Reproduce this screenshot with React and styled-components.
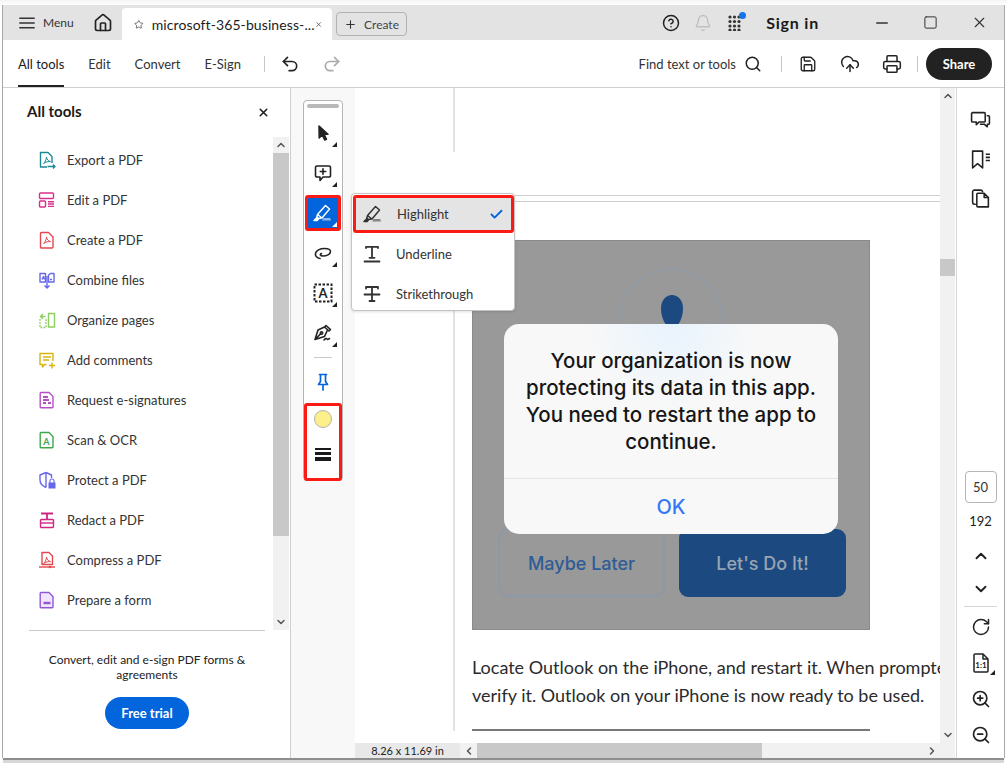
import styled, { createGlobalStyle } from "styled-components";
import {
  Bell,
  Check,
  ChevronDown,
  ChevronLeft,
  ChevronRight,
  ChevronUp,
  CircleHelp,
  CloudUpload,
  House,
  Minus,
  Plus,
  Printer,
  Redo2,
  RotateCw,
  Save,
  Search,
  Square,
  Star,
  Undo2,
  X,
  ZoomIn,
  ZoomOut,
} from "lucide-react";

const GlobalStyle = createGlobalStyle`
  html, body {
    margin: 0;
    padding: 0;
    background: #fff;
  }
  * {
    box-sizing: border-box;
  }
  #root {
    width: 1007px;
    height: 763px;
    overflow: hidden;
    font-family: Lato, "Open Sans", sans-serif;
    color: #2c2c2c;
  }
`;

const Frame = styled.div`
  width: 1007px;
  height: 763px;
  padding: 5px 3px 5px 3px;
  background: linear-gradient(#f4f4f4, #fff 5px);
`;

const Window = styled.div`
  width: 1001px;
  height: 753px;
  display: flex;
  flex-direction: column;
  background: #fff;
  box-shadow: -1px 0 0 #a8a8a8, 1px 0 0 #a8a8a8, 0 2px 0 #8e8e8e, 0 6px 0 #d8d8d8;
`;

const TitleBar = styled.div`
  height: 35px;
  display: flex;
  align-items: flex-end;
  background: #e3e3e3;
  flex: none;
`;

const MenuButton = styled.div`
  height: 35px;
  width: 90px;
  padding-left: 16px;
  display: flex;
  align-items: center;
  gap: 8px;
  font-size: 12px;
  color: #333;
`;

const HomeButton = styled.div`
  height: 35px;
  width: 29px;
  display: flex;
  align-items: center;
`;

const Tab = styled.div`
  width: 210px;
  height: 32px;
  padding: 0 10px 0 12px;
  display: flex;
  align-items: center;
  background: #fff;
  border-radius: 4px 4px 0 0;
  font-size: 14px;
  color: #1c1c1c;
`;

const TabTitle = styled.span`
  margin-left: 8px;
  flex: 1;
  white-space: nowrap;
  letter-spacing: 0.1px;
`;

const CreateButton = styled.div`
  width: 71px;
  height: 24px;
  margin: 0 0 4px 4px;
  display: flex;
  align-items: center;
  justify-content: center;
  gap: 7px;
  border: 1px solid #b1b1b1;
  border-radius: 4px;
  font-size: 12px;
  color: #444;
`;

const TitleRight = styled.div`
  height: 35px;
  margin-left: auto;
  display: flex;
  align-items: center;
`;

const TitleIcon = styled.div`
  width: 32px;
  display: flex;
  justify-content: center;
  position: relative;
  color: ${(p) => p.$color || "#222"};
`;

const SignIn = styled.span`
  margin: 0 38px 0 15px;
  font-size: 16px;
  font-weight: 700;
  letter-spacing: 0.8px;
  color: #1a1a1a;
`;

const WindowControl = styled.div`
  width: 49px;
  display: flex;
  justify-content: center;
  color: #333;
`;

const Toolbar = styled.div`
  height: 48px;
  display: flex;
  align-items: center;
  padding: 0 12px 0 15px;
  border-bottom: 1px solid #d0d0d0;
  flex: none;
`;

const NavTab = styled.div`
  height: 47px;
  margin-right: 24px;
  display: flex;
  align-items: center;
  font-size: 13px;
  color: ${(p) => (p.$active ? "#1a1a1a" : "#333")};
  border-bottom: 2px solid ${(p) => (p.$active ? "#222" : "transparent")};
  padding-top: 2px;
`;

const ToolbarRule = styled.div`
  width: 1px;
  height: 16px;
  background: #c6c6c6;
  margin: ${(p) => p.$margin};
`;

const ToolbarIcon = styled.div`
  display: flex;
  margin: ${(p) => p.$margin || "0"};
  color: ${(p) => p.$color || "#222"};
`;

const FindLabel = styled.span`
  margin-left: auto;
  font-size: 13px;
  color: #333;
`;

const ShareButton = styled.div`
  width: 66px;
  height: 32px;
  margin-left: 8px;
  display: flex;
  align-items: center;
  justify-content: center;
  border-radius: 16px;
  background: #222;
  color: #fff;
  font-size: 13px;
  font-weight: 700;
`;

const Body = styled.div`
  flex: 1;
  min-height: 0;
  display: flex;
`;

const ToolsPanel = styled.aside`
  width: 288px;
  flex: none;
  display: flex;
  flex-direction: column;
  border-right: 1px solid #cfcfcf;
`;

const PanelHeader = styled.div`
  height: 49px;
  padding: 14px 20px 0 24px;
  display: flex;
  align-items: flex-start;
  justify-content: space-between;
  font-size: 15px;
  font-weight: 700;
  color: #1a1a1a;
  flex: none;
`;

const PanelClose = styled.div`
  display: flex;
  margin-top: 4px;
`;

const ToolsBody = styled.div`
  height: 493px;
  display: flex;
  flex: none;
`;

const ToolsList = styled.div`
  flex: 1;
  padding-top: 3px;
`;

const ToolRow = styled.div`
  height: 40px;
  padding-left: 35px;
  display: flex;
  align-items: center;
  gap: 11px;
  font-size: 13px;
  color: #333;
`;

const PanelScroll = styled.div`
  width: 16px;
  margin-right: 1px;
  display: flex;
  flex-direction: column;
  background: #f1f1f1;
  color: #555;
`;

const ScrollArrow = styled.div`
  height: 16px;
  flex: none;
  display: flex;
  align-items: center;
  justify-content: center;
`;

const PanelThumb = styled.div`
  height: 383px;
  background: #c8c8c8;
  flex: none;
`;

const Spacer = styled.div`
  flex: 1;
`;

const PanelFooter = styled.div`
  margin: 0 25px 0 26px;
  padding-top: 21px;
  border-top: 1px solid #c9c9c9;
  display: flex;
  flex-direction: column;
  align-items: center;
  text-align: center;
  font-size: 12px;
  line-height: 15px;
  color: #222;
`;

const TrialButton = styled.div`
  width: 84px;
  height: 32px;
  margin-top: 15px;
  display: flex;
  align-items: center;
  justify-content: center;
  border-radius: 16px;
  background: #0265dc;
  color: #fff;
  font-size: 13px;
  font-weight: 700;
`;

const Center = styled.div`
  flex: 1;
  min-width: 0;
  position: relative;
  display: grid;
  grid-template-columns: 64px 585px 15px;
  grid-template-rows: 1fr 15px;
  background: #fff;
`;

const Gutter = styled.div`
  grid-row: 1 / 3;
  background: #f8f8f8;
  padding: 12px 0 0 12px;
`;

const FloatingTools = styled.div`
  width: 40px;
  height: 381px;
  padding-top: 3px;
  display: flex;
  flex-direction: column;
  align-items: center;
  background: #fff;
  border: 1px solid #b5b5b5;
  border-radius: 4px;
`;

const Grip = styled.div`
  width: 32px;
  height: 4px;
  margin-bottom: 5px;
  border-radius: 2px;
  background: #b8b8b8;
  flex: none;
`;

const ToolButton = styled.div`
  width: 36px;
  height: ${(p) => (p.$active ? "36px" : "40px")};
  margin: ${(p) => (p.$active ? "2px 0" : "0")};
  flex: none;
  display: flex;
  align-items: center;
  justify-content: center;
  position: relative;
  color: ${(p) => (p.$active ? "#fff" : p.$color || "#222")};
  background: ${(p) => (p.$active ? "#0265dc" : "transparent")};
  border: ${(p) => (p.$active ? "3px solid #fb1a14" : "none")};
  border-radius: ${(p) => (p.$active ? "3px" : "0")};

  &::after {
    content: "";
    display: ${(p) => (p.$corner ? "block" : "none")};
    position: absolute;
    right: ${(p) => (p.$active ? "1px" : "4px")};
    bottom: ${(p) => (p.$active ? "1px" : "6px")};
    border-style: solid;
    border-width: 0 0 5px 5px;
    border-color: transparent transparent ${(p) => (p.$active ? "#fff" : "#222")} transparent;
  }
`;

const ToolDivider = styled.div`
  width: 18px;
  height: 1px;
  margin: 4px 0;
  background: #c9c9c9;
  flex: none;
`;

const MarkedGroup = styled.div`
  width: 38px;
  height: 78px;
  margin-top: 1px;
  flex: none;
  display: flex;
  flex-direction: column;
  align-items: center;
  border: 3px solid #fb1a14;
  border-radius: 3px;
`;

const ColorDot = styled.div`
  width: 18px;
  height: 18px;
  margin-top: 4px;
  border-radius: 50%;
  background: #fdf08a;
  border: 1px solid #b3b3b3;
`;

const WeightLines = styled.div`
  width: 16px;
  margin-top: 20px;
  display: flex;
  flex-direction: column;
  gap: 2px;
`;

const WeightLine = styled.div`
  height: ${(p) => p.$h}px;
  background: #1a1a1a;
`;

const Popup = styled.div`
  position: absolute;
  left: 60px;
  top: 105px;
  width: 164px;
  height: 118px;
  padding-top: 1px;
  background: #fff;
  border: 1px solid #c4c4c4;
  border-radius: 4px;
  box-shadow: 0 1px 3px rgba(0, 0, 0, 0.12);
  z-index: 3;
`;

const PopupItem = styled.div`
  height: ${(p) => (p.$marked ? "38px" : "40px")};
  margin: ${(p) => (p.$marked ? "0 0 1px 1px" : "0")};
  padding-left: ${(p) => (p.$marked ? "7px" : "10px")};
  padding-right: 7px;
  display: flex;
  align-items: center;
  font-size: 13px;
  color: #333;
  background: ${(p) => (p.$marked ? "#e4e4e4" : "transparent")};
  border: ${(p) => (p.$marked ? "3px solid #fb1a14" : "none")};
  border-radius: ${(p) => (p.$marked ? "3px" : "0")};
`;

const PopupLabel = styled.span`
  margin-left: 14px;
  flex: 1;
`;

const DocArea = styled.div`
  overflow: hidden;
  padding-left: 98px;
`;

const PageTail = styled.div`
  height: 64px;
  border-left: 2px solid #e3e3e3;
`;

const Page = styled.div`
  width: 600px;
  margin-top: 43px;
  padding: 44px 0 0 17px;
  border-left: 2px solid #e3e3e3;
  border-top: 1px solid #cfcfcf;
  box-shadow: 0 -1px 0 #fff;
  position: relative;

  &::before {
    content: "";
    position: absolute;
    top: 5px;
    left: 0;
    width: 100%;
    height: 1px;
    background: #cfcfcf;
  }
`;

const Shot = styled.div`
  width: 398px;
  height: 390px;
  position: relative;
  background: #999;
  border: 1px solid #8a8a8a;
  font-family: Inter, sans-serif;
`;

const Ring = styled.div`
  position: absolute;
  left: 145px;
  top: 27px;
  width: 106px;
  height: 106px;
  border-radius: 50%;
  border: 2px solid #929aa4;
`;

const Drop = styled.div`
  position: absolute;
  left: 188px;
  top: 54px;
  width: 22px;
  height: 32px;
  border-radius: 50% 50% 46% 46% / 40% 40% 60% 60%;
  background: #1c4a80;
`;

const ShotButton = styled.div`
  position: absolute;
  top: 288px;
  left: ${(p) => p.$left}px;
  width: 167px;
  height: 68px;
  display: flex;
  align-items: center;
  justify-content: center;
  border-radius: 9px;
  font-size: 18px;
  font-weight: 500;
  color: ${(p) => (p.$solid ? "#98a4b3" : "#2e5c97")};
  background: ${(p) => (p.$solid ? "#1c4a80" : "transparent")};
  border: 2px solid ${(p) => (p.$solid ? "#1c4a80" : "#8d98a8")};
`;

const Alert = styled.div`
  position: absolute;
  left: 31px;
  top: 83px;
  width: 334px;
  height: 210px;
  display: flex;
  flex-direction: column;
  border-radius: 15px;
  background: radial-gradient(circle at 50% 0, #e8f3fd, #f8f8f8 32%);
`;

const AlertText = styled.div`
  height: 155px;
  padding-top: 23px;
  text-align: center;
  font-size: 20.5px;
  line-height: 27px;
  font-weight: 500;
  color: #161616;
  border-bottom: 1px solid #e6e6e6;
`;

const AlertAction = styled.div`
  flex: 1;
  display: flex;
  align-items: center;
  justify-content: center;
  font-size: 20px;
  font-weight: 500;
  color: #3478f6;
`;

const DocText = styled.p`
  margin: 23px 0 0 0;
  width: 560px;
  font-family: Lato, sans-serif;
  font-size: 18px;
  line-height: 28px;
  color: #2b2b2b;
  white-space: nowrap;
`;

const DocRule = styled.div`
  width: 398px;
  height: 2px;
  margin-top: 20px;
  background: #777;
`;

const DocScroll = styled.div`
  display: flex;
  flex-direction: column;
  background: #f1f1f1;
  color: #555;
`;

const DocThumb = styled.div`
  height: 17px;
  margin-top: 155px;
  background: #c8c8c8;
  flex: none;
`;

const StatusBar = styled.div`
  display: flex;
  height: 15px;
`;

const SizeLabel = styled.div`
  width: 105px;
  display: flex;
  align-items: center;
  justify-content: center;
  background: #e8e8e8;
  font-size: 11px;
  color: #222;
`;

const HScroll = styled.div`
  flex: 1;
  display: flex;
  align-items: center;
  background: #f1f1f1;
  color: #555;
`;

const HArrow = styled.div`
  width: 17px;
  height: 15px;
  flex: none;
  display: flex;
  align-items: center;
  justify-content: center;
`;

const HThumb = styled.div`
  width: 285px;
  height: 15px;
  background: #c8c8c8;
`;

const Corner = styled.div`
  background: #f1f1f1;
`;

const RightRail = styled.aside`
  width: 48px;
  flex: none;
  padding: 13px 0 5px;
  display: flex;
  flex-direction: column;
  align-items: center;
  border-left: 1px solid #d6d6d6;
  color: #222;
`;

const RailIcon = styled.div`
  height: ${(p) => p.$h || 39}px;
  width: 100%;
  flex: none;
  display: flex;
  align-items: center;
  justify-content: center;
  position: relative;
`;

const PageInput = styled.div`
  width: 32px;
  height: 32px;
  display: flex;
  align-items: center;
  justify-content: center;
  border: 1px solid #b5b5b5;
  border-radius: 4px;
  font-size: 13px;
  color: #333;
  flex: none;
`;

const PageCount = styled.div`
  height: 36px;
  display: flex;
  align-items: center;
  font-size: 13px;
  color: #222;
  flex: none;
`;

const RailRule = styled.div`
  width: 33px;
  height: 1px;
  margin: 1px 0 2px;
  background: #d6d6d6;
  flex: none;
`;

const CornerMark = styled.span`
  position: absolute;
  right: 9px;
  bottom: 6px;
  border-style: solid;
  border-width: 0 0 5px 5px;
  border-color: transparent transparent #222 transparent;
`;

const Badge = styled.span`
  position: absolute;
  top: -3px;
  right: 5px;
  width: 7px;
  height: 7px;
  border-radius: 50%;
  background: #1473e6;
`;

const ToolIcon = ({ color, children, width = 1.4 }) => (
  <svg width="18" height="18" viewBox="0 0 18 18" fill="none" stroke={color} strokeWidth={width} strokeLinejoin="round" style={{ flex: "none" }}>
    {children}
  </svg>
);

const Acro = (props) => (
  <path d="M5.5 12.5c1.5-1 2.8-3.6 3-6.5.4 2.4 1.6 4 4 4.6-2.6-.2-5 .4-7 1.9z" strokeWidth="1" {...props} />
);

const tools = [
  {
    label: "Export a PDF",
    icon: (
      <ToolIcon color="#1c8a94">
        <path d="M9 16H2.5V1.5h7.5l4 4V12" />
        <Acro />
        <path d="M9.5 15.5h7.5M15 13.5l2 2-2 2" />
      </ToolIcon>
    ),
  },
  {
    label: "Edit a PDF",
    icon: (
      <ToolIcon color="#d8308f">
        <rect x="1.5" y="2" width="14" height="5.5" rx="1" />
        <rect x="1.5" y="10" width="6" height="6" rx="1" />
        <path d="M10 10.7h6M10 13h6M10 15.4h6" />
      </ToolIcon>
    ),
  },
  {
    label: "Create a PDF",
    icon: (
      <ToolIcon color="#e34850">
        <path d="M3.5 1.5h7l4.5 4.5v10a1 1 0 0 1-1 1H3.5a1 1 0 0 1-1-1v-13.500a1 1 0 0 1 1-1z" />
        <Acro />
      </ToolIcon>
    ),
  },
  {
    label: "Combine files",
    icon: (
      <ToolIcon color="#6767ec">
        <path d="M7.500 11H2V2.500h5.500zM10.500 11H16V2.500h-3.500l-2 1.500z" />
        <path d="M4 8.500l1.500-3 1 3M12 8.500h2" width="1" />
        <path d="M9 5v11.500M6.500 14.500L9 17l2.500-2.500" />
      </ToolIcon>
    ),
  },
  {
    label: "Organize pages",
    icon: (
      <ToolIcon color="#8ccf5f">
        <rect x="10.500" y="2.500" width="6" height="13.500" />
        <path d="M2 8v8.500h6V8" strokeDasharray="1.800 1.200" />
        <path d="M7.500 5.500H3M5 3L2.500 5.500 5 8" />
      </ToolIcon>
    ),
  },
  {
    label: "Add comments",
    icon: (
      <ToolIcon color="#d9b310">
        <path d="M8.500 13.500H6.500L4.500 16v-2.500H2V2.500h13V10" />
        <path d="M5 6h8M5 9h6" />
        <path d="M14 11.500v6M11 14.500h6" />
      </ToolIcon>
    ),
  },
  {
    label: "Request e-signatures",
    icon: (
      <ToolIcon color="#b84fc9">
        <path d="M3 1.500h8l4 4v10.500a.8.800 0 0 1-.8.800H3a.8.800 0 0 1-.8-.8V2.300A.8.800 0 0 1 3 1.500z" />
        <path d="M5 6h5M5 9h6M5 12h3M10 12h3" strokeWidth="1.800" />
      </ToolIcon>
    ),
  },
  {
    label: "Scan & OCR",
    icon: (
      <ToolIcon color="#3da74e">
        <path d="M3 1.500h8l4 4v10.500a.8.800 0 0 1-.8.800H3a.8.800 0 0 1-.8-.8V2.300A.8.800 0 0 1 3 1.500z" />
        <text x="8.500" y="14" fontSize="9" fontWeight="700" textAnchor="middle" fill="#3da74e" stroke="none" fontFamily="Lato, sans-serif">A</text>
      </ToolIcon>
    ),
  },
  {
    label: "Protect a PDF",
    icon: (
      <ToolIcon color="#6767ec">
        <path d="M8 1.500L2 4v5c0 3.500 2.500 6 6 7.500M8 1.500l5.500 2.500v3M8 1.500v15" />
        <rect x="10.500" y="11.500" width="7" height="6" fill="#6767ec" stroke="none" />
        <path d="M12 12V10a2 2 0 0 1 4 0v2" strokeWidth="1.100" />
      </ToolIcon>
    ),
  },
  {
    label: "Redact a PDF",
    icon: (
      <ToolIcon color="#ce2783">
        <path d="M3 2.500h12M9 2.500V9" strokeWidth="1.800" />
        <rect x="2.500" y="8.500" width="13" height="8" rx="1" />
        <path d="M3 12h12" />
      </ToolIcon>
    ),
  },
  {
    label: "Compress a PDF",
    icon: (
      <ToolIcon color="#e34850">
        <path d="M4 1.500h7l3.500 3.500v8.500H4z" />
        <Acro />
        <path d="M1 16h16" />
        <circle cx="12" cy="16" r="1.300" fill="#e34850" stroke="none" />
      </ToolIcon>
    ),
  },
  {
    label: "Prepare a form",
    icon: (
      <ToolIcon color="#9256d9">
        <path d="M3 1.500h8l4 4v10.500a.8.800 0 0 1-.8.800H3a.8.800 0 0 1-.8-.8V2.300A.8.800 0 0 1 3 1.500z" fill="#efe6fb" />
        <path d="M5.500 12h7" strokeWidth="2.400" />
      </ToolIcon>
    ),
  },
];

const Glyph = ({ size = 20, children, width = 1.5 }) => (
  <svg width={size} height={size} viewBox="0 0 20 20" fill="none" stroke="currentColor" strokeWidth={width} strokeLinejoin="round" strokeLinecap="round">
    {children}
  </svg>
);

const MenuGlyph = () => (
  <Glyph size={16} width={1.8}>
    <path d="M1 4h18M1 10h18M1 16h18" />
  </Glyph>
);

const AppsGlyph = () => (
  <svg width="16" height="16" viewBox="0 0 16 16" fill="#333">
    {[2, 6.500, 11, 15].map((y) =>
      [2, 6.500, 11].map((x) => <circle key={`${x}-${y}`} cx={x + 1} cy={y} r="1.600" />)
    )}
  </svg>
);

const CursorGlyph = () => (
  <Glyph>
    <path d="M6 3l.2 12 3-3 2.500 5 1.800-.8-2.300-5H15z" fill="currentColor" />
  </Glyph>
);

const CommentGlyph = () => (
  <Glyph width={1.6}>
    <path d="M4 3h12a1.500 1.500 0 0 1 1.500 1.500v8A1.500 1.500 0 0 1 16 14h-6l-3 3.500V14H4a1.500 1.500 0 0 1-1.500-1.500v-8A1.500 1.500 0 0 1 4 3z" />
    <path d="M10 5.800v5.400M7.300 8.500h5.400" />
  </Glyph>
);

const HighlightGlyph = () => (
  <Glyph width={1.5}>
    <path d="M12.500 2.500l4 3.500-7.500 9-4.500-3.500zM4.500 11.500l-.7 2.800 1.700 1.200 3-.5" />
    <path d="M1 17.500l3-3 1.500 1.300-1.300 1.700z" fill="currentColor" />
    <path d="M9 17.500h9l-.8-2.500h-6.500z" fill="currentColor" stroke="none" opacity="0.55" />
  </Glyph>
);

const LassoGlyph = () => (
  <Glyph width={1.6}>
    <path d="M7 15.500C4 15 2 13 2.500 10.500 3 7.500 7 5.500 11.500 5.500c3.500 0 6 1 6 3 0 3-4 4.500-7.500 4.500-3 0-3.500-2 -1.500-2.500" />
  </Glyph>
);

const SelectTextGlyph = () => (
  <svg width="20" height="20" viewBox="0 0 20 20" fill="none">
    <rect x="1.500" y="1.500" width="17" height="17" stroke="#222" strokeWidth="2" strokeDasharray="2.500 1.500" />
    <text x="10" y="15" textAnchor="middle" fontSize="13" fontWeight="700" fill="#222" fontFamily="Lato, sans-serif">A</text>
  </svg>
);

const SignGlyph = () => (
  <Glyph width={1.6}>
    <path d="M13 2.500l4.500 4-1.500 1.500-4.500-4zM11.500 4L5 7l-3 9.500 9.500-3 3-6.500M2.500 16l5-5" />
    <circle cx="8.500" cy="10" r="1.200" />
    <path d="M11 17c1.500-1.500 2.500-2 3-1s1.500 0 2.500-.5" />
  </Glyph>
);

const PinGlyph = () => (
  <Glyph width={1.7}>
    <path d="M6.500 2.500h7M7.500 2.500v7L5.500 12.500h9l-2-3v-7M10 12.500v5.500" />
  </Glyph>
);

const UnderlineGlyph = () => (
  <Glyph width={1.8}>
    <path d="M4 4V2.800h12V4M10 2.800v11M7.500 13.800h5M2.500 17.500h15" />
  </Glyph>
);

const StrikeGlyph = () => (
  <Glyph width={1.8}>
    <path d="M4 4.500V3h12v1.500M10 3v14M7.500 17h5M2.500 10.500h15" />
  </Glyph>
);

const CommentsGlyph = () => (
  <Glyph size={21} width={1.5}>
    <path d="M2.500 2.500h11a1 1 0 0 1 1 1v7a1 1 0 0 1-1 1H8.500l-2.500 2.500v-2.500H2.500a1 1 0 0 1-1-1v-7a1 1 0 0 1 1-1z" />
    <path d="M16.500 5.500h1a1 1 0 0 1 1 1v6a1 1 0 0 1-1 1h-1V16l-3-2.500H10" />
  </Glyph>
);

const BookmarksGlyph = () => (
  <Glyph size={21} width={1.5}>
    <path d="M2.500 2h9.500v16l-4.750-4-4.750 4z" />
    <path d="M15 5h4M15 8h4M15 11h4" strokeLinecap="butt" />
  </Glyph>
);

const PagesGlyph = () => (
  <Glyph size={21} width={1.5}>
    <path d="M5 15.500H4a2 2 0 0 1-1.500-2V3.500A2 2 0 0 1 4 2h6a2 2 0 0 1 2 1.500" />
    <path d="M7.500 5h6l4 4v9H7.500a1 1 0 0 1-1-1V6a1 1 0 0 1 1-1zM13.500 5v4h4" />
  </Glyph>
);

const ActualSizeGlyph = () => (
  <svg width="20" height="20" viewBox="0 0 20 20" fill="none" stroke="#222" strokeWidth="1.500" strokeLinejoin="round">
    <path d="M4 1h8l5 5v12a1 1 0 0 1-1 1H4a1 1 0 0 1-1-1V2a1 1 0 0 1 1-1z" />
    <path d="M12 1v5h5" />
    <text x="10" y="15" textAnchor="middle" fontSize="8" fontWeight="700" fill="#222" stroke="none" fontFamily="Lato, sans-serif">1:1</text>
  </svg>
);

export default function App() {
  return (
    <Frame>
      <GlobalStyle />
      <Window>
        <TitleBar>
          <MenuButton>
            <MenuGlyph />
            Menu
          </MenuButton>
          <HomeButton>
            <House size={20} color="#222" strokeWidth={2} />
          </HomeButton>
          <Tab>
            <Star size={17} color="#555" strokeWidth={2} />
            <TabTitle>microsoft-365-business-...</TabTitle>
            <X size={13} color="#666" strokeWidth={3} />
          </Tab>
          <CreateButton>
            <Plus size={13} color="#333" strokeWidth={2} />
            Create
          </CreateButton>
          <TitleRight>
            <TitleIcon>
              <CircleHelp size={18} strokeWidth={2} />
            </TitleIcon>
            <TitleIcon $color="#c0c0c0">
              <Bell size={18} strokeWidth={1.8} />
            </TitleIcon>
            <TitleIcon>
              <AppsGlyph />
              <Badge />
            </TitleIcon>
            <SignIn>Sign in</SignIn>
            <WindowControl>
              <Minus size={18} strokeWidth={2} />
            </WindowControl>
            <WindowControl>
              <Square size={15} strokeWidth={1.6} />
            </WindowControl>
            <WindowControl>
              <X size={17} strokeWidth={1.6} />
            </WindowControl>
          </TitleRight>
        </TitleBar>

        <Toolbar>
          <NavTab $active>All tools</NavTab>
          <NavTab>Edit</NavTab>
          <NavTab>Convert</NavTab>
          <NavTab>E-Sign</NavTab>
          <ToolbarRule $margin="0 15px 0 -1px" />
          <ToolbarIcon>
            <Undo2 size={20} strokeWidth={2} />
          </ToolbarIcon>
          <ToolbarIcon $margin="0 0 0 22px" $color="#aaa">
            <Redo2 size={20} strokeWidth={2} />
          </ToolbarIcon>
          <FindLabel>Find text or tools</FindLabel>
          <ToolbarIcon $margin="0 0 0 8px">
            <Search size={18} strokeWidth={2} />
          </ToolbarIcon>
          <ToolbarRule $margin="0 17px 0 19px" />
          <ToolbarIcon>
            <Save size={18} strokeWidth={1.8} />
          </ToolbarIcon>
          <ToolbarIcon $margin="0 0 0 23px">
            <CloudUpload size={20} strokeWidth={1.8} />
          </ToolbarIcon>
          <ToolbarIcon $margin="0 0 0 22px">
            <Printer size={20} strokeWidth={1.8} />
          </ToolbarIcon>
          <ToolbarRule $margin="0 0 0 15px" />
          <ShareButton>Share</ShareButton>
        </Toolbar>

        <Body>
          <ToolsPanel>
            <PanelHeader>
              All tools
              <PanelClose>
                <X size={13} color="#222" strokeWidth={3} />
              </PanelClose>
            </PanelHeader>
            <ToolsBody>
              <ToolsList>
                {tools.map((t) => (
                  <ToolRow key={t.label}>
                    {t.icon}
                    {t.label}
                  </ToolRow>
                ))}
              </ToolsList>
              <PanelScroll>
                <ScrollArrow>
                  <ChevronUp size={12} strokeWidth={3} />
                </ScrollArrow>
                <PanelThumb />
                <Spacer />
                <ScrollArrow>
                  <ChevronDown size={12} strokeWidth={3} />
                </ScrollArrow>
              </PanelScroll>
            </ToolsBody>
            <PanelFooter>
              Convert, edit and e-sign PDF forms &
              <br />
              agreements
              <TrialButton>Free trial</TrialButton>
            </PanelFooter>
          </ToolsPanel>

          <Center>
            <Gutter>
              <FloatingTools>
                <Grip />
                <ToolButton $corner>
                  <CursorGlyph />
                </ToolButton>
                <ToolButton $corner>
                  <CommentGlyph />
                </ToolButton>
                <ToolButton $corner $active>
                  <HighlightGlyph />
                </ToolButton>
                <ToolButton $corner>
                  <LassoGlyph />
                </ToolButton>
                <ToolButton $corner>
                  <SelectTextGlyph />
                </ToolButton>
                <ToolButton $corner>
                  <SignGlyph />
                </ToolButton>
                <ToolDivider />
                <ToolButton $color="#0265dc">
                  <PinGlyph />
                </ToolButton>
                <MarkedGroup>
                  <ColorDot />
                  <WeightLines>
                    <WeightLine $h={2} />
                    <WeightLine $h={3} />
                    <WeightLine $h={4} />
                  </WeightLines>
                </MarkedGroup>
              </FloatingTools>
            </Gutter>

            <DocArea>
              <PageTail />
              <Page>
                <Shot>
                  <Ring />
                  <Drop />
                  <ShotButton $left={25}>Maybe Later</ShotButton>
                  <ShotButton $left={206} $solid>
                    Let's Do It!
                  </ShotButton>
                  <Alert>
                    <AlertText>
                      Your organization is now
                      <br />
                      protecting its data in this app.
                      <br />
                      You need to restart the app to
                      <br />
                      continue.
                    </AlertText>
                    <AlertAction>OK</AlertAction>
                  </Alert>
                </Shot>
                <DocText>
                  Locate Outlook on the iPhone, and restart it. When prompted,
                  <br />
                  verify it. Outlook on your iPhone is now ready to be used.
                </DocText>
                <DocRule />
              </Page>
            </DocArea>

            <DocScroll>
              <ScrollArrow>
                <ChevronUp size={12} strokeWidth={3} />
              </ScrollArrow>
              <DocThumb />
              <Spacer />
              <ScrollArrow>
                <ChevronDown size={12} strokeWidth={3} />
              </ScrollArrow>
            </DocScroll>

            <StatusBar>
              <SizeLabel>8.26 x 11.69 in</SizeLabel>
              <HScroll>
                <HArrow>
                  <ChevronLeft size={12} strokeWidth={3} />
                </HArrow>
                <HThumb />
                <Spacer />
                <HArrow>
                  <ChevronRight size={12} strokeWidth={3} />
                </HArrow>
              </HScroll>
            </StatusBar>
            <Corner />

            <Popup>
              <PopupItem $marked>
                <HighlightGlyph />
                <PopupLabel>Highlight</PopupLabel>
                <Check size={15} color="#0265dc" strokeWidth={3} />
              </PopupItem>
              <PopupItem>
                <UnderlineGlyph />
                <PopupLabel>Underline</PopupLabel>
              </PopupItem>
              <PopupItem>
                <StrikeGlyph />
                <PopupLabel>Strikethrough</PopupLabel>
              </PopupItem>
            </Popup>
          </Center>

          <RightRail>
            <RailIcon>
              <CommentsGlyph />
            </RailIcon>
            <RailIcon>
              <BookmarksGlyph />
            </RailIcon>
            <RailIcon>
              <PagesGlyph />
            </RailIcon>
            <Spacer />
            <PageInput>50</PageInput>
            <PageCount>192</PageCount>
            <RailIcon $h={33}>
              <ChevronUp size={18} strokeWidth={2.500} />
            </RailIcon>
            <RailIcon $h={33}>
              <ChevronDown size={18} strokeWidth={2.500} />
            </RailIcon>
            <RailRule />
            <RailIcon $h={36}>
              <RotateCw size={20} strokeWidth={1.800} />
            </RailIcon>
            <RailIcon $h={36}>
              <ActualSizeGlyph />
              <CornerMark />
            </RailIcon>
            <RailIcon $h={36}>
              <ZoomIn size={20} strokeWidth={2} />
            </RailIcon>
            <RailIcon $h={36}>
              <ZoomOut size={20} strokeWidth={2} />
            </RailIcon>
          </RightRail>
        </Body>
      </Window>
    </Frame>
  );
}
